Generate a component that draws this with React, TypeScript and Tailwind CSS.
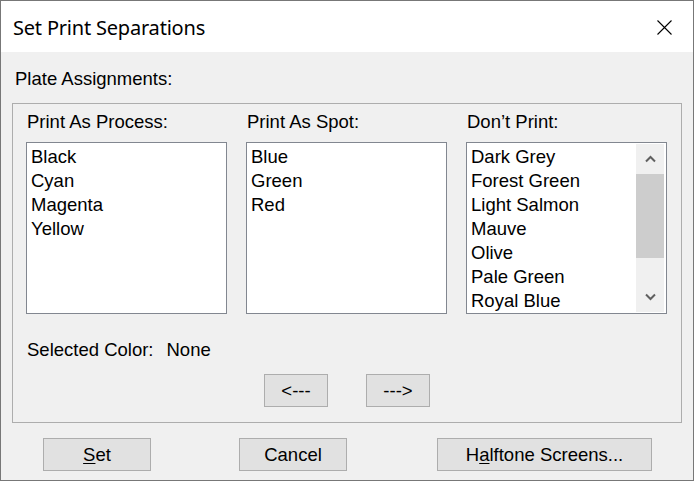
import React from "react";

const font = { fontFamily: '"Liberation Sans", Arial, sans-serif' };

function ListBox({ items, scroll }: { items: string[]; scroll?: boolean }) {
  return (
    <div className="w-[201px] h-[172px] border border-[#828790] bg-white flex flex-row overflow-hidden">
      <div className="flex-1 flex flex-col pt-[2px] pl-[4px] overflow-hidden">
        {items.map((it) => (
          <div key={it} className="h-[24px] leading-[24px] text-[18.5px] text-black whitespace-nowrap">
            {it}
          </div>
        ))}
      </div>
      {scroll && (
        <div className="w-[28px] my-[1px] mr-[2px] bg-[#f0f0f0] flex flex-col">
          <div className="h-[30px] flex items-center justify-center">
            <svg width="11" height="8" viewBox="0 0 11 8">
              <path d="M1 6.5 L5.5 2 L10 6.5" fill="none" stroke="#606060" strokeWidth="2" />
            </svg>
          </div>
          <div className="h-[84px] bg-[#cdcdcd]" />
          <div className="flex-1" />
          <div className="h-[30px] flex items-center justify-center">
            <svg width="11" height="8" viewBox="0 0 11 8">
              <path d="M1 1.5 L5.5 6 L10 1.5" fill="none" stroke="#606060" strokeWidth="2" />
            </svg>
          </div>
        </div>
      )}
    </div>
  );
}

function Column({ label, items, scroll }: { label: string; items: string[]; scroll?: boolean }) {
  return (
    <div className="flex flex-col w-[201px]">
      <div className="h-[21px] leading-[21px] text-[18.5px] text-black pl-[1px] whitespace-nowrap">{label}</div>
      <div className="mt-[10px]">
        <ListBox items={items} scroll={scroll} />
      </div>
    </div>
  );
}

function Btn({ children, w }: { children: React.ReactNode; w: string }) {
  return (
    <div
      className={`${w} h-[33px] bg-[#e1e1e1] border border-[#adadad] flex items-center justify-center text-[18.5px] text-black`}
    >
      {children}
    </div>
  );
}

export default function App() {
  return (
    <div className="w-[695px] h-[482px] bg-white" style={font}>
      <div className="w-[694px] h-[481px] border border-[#777777] bg-[#f0f0f0] flex flex-col">
        <div className="h-[51px] bg-white flex flex-row items-center justify-between">
          <div
            className="pl-[12px] text-[20px] tracking-[-0.2px] text-black pt-[2px]"
            style={{ fontFamily: '"Noto Sans", "Open Sans", sans-serif' }}
          >
            Set Print Separations
          </div>
          <div className="mr-[21px] pt-[2px]">
            <svg width="15" height="15" viewBox="0 0 15 15">
              <path d="M0.5 0.5 L14.5 14.5 M14.5 0.5 L0.5 14.5" stroke="#000" strokeWidth="1.1" />
            </svg>
          </div>
        </div>
        <div className="flex flex-col pt-[16px]">
          <div className="pl-[14px] h-[21px] leading-[21px] text-[18.5px] text-black">Plate Assignments:</div>
          <div className="mt-[14px] ml-[11px] w-[670px] h-[320px] border border-[#adadad] flex flex-col pt-[7px] pl-[13px]">
            <div className="flex flex-row gap-[19px]">
              <Column label="Print As Process:" items={["Black", "Cyan", "Magenta", "Yellow"]} />
              <Column label="Print As Spot:" items={["Blue", "Green", "Red"]} />
              <Column
                label="Don’t Print:"
                items={["Dark Grey", "Forest Green", "Light Salmon", "Mauve", "Olive", "Pale Green", "Royal Blue"]}
                scroll
              />
            </div>
            <div className="mt-[25px] h-[21px] leading-[21px] text-[18.5px] text-black pl-[1px] flex flex-row">
              <span>Selected Color:</span>
              <span className="ml-[13px]">None</span>
            </div>
            <div className="mt-[14px] flex flex-row justify-center gap-[38px] pr-[13px]">
              <Btn w="w-[64px]">{"<---"}</Btn>
              <Btn w="w-[64px]">{"--->"}</Btn>
            </div>
          </div>
          <div className="mt-[15px] ml-[42px] flex flex-row">
            <Btn w="w-[108px]">
              <span>
                <span className="underline underline-offset-2">S</span>et
              </span>
            </Btn>
            <div className="w-[88px]" />
            <Btn w="w-[108px]">Cancel</Btn>
            <div className="w-[90px]" />
            <Btn w="w-[215px]">
              <span>
                H<span className="underline underline-offset-2">a</span>lftone Screens...
              </span>
            </Btn>
          </div>
        </div>
      </div>
    </div>
  );
}
